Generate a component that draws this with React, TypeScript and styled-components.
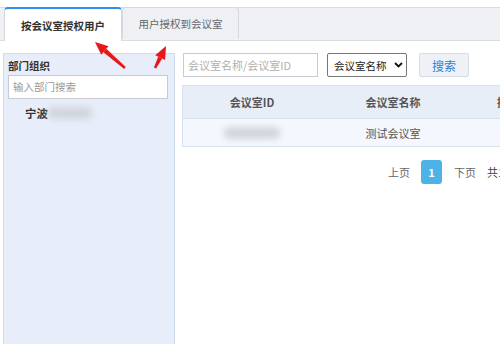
import React from "react";
import styled, { createGlobalStyle } from "styled-components";

const Global = createGlobalStyle`
  html, body { margin: 0; padding: 0; background: #fff; overflow: hidden; }
  body { width: 500px; height: 344px; font-family: "Noto Sans CJK SC", "Noto Sans", sans-serif; }
  * { box-sizing: border-box; }
`;

const Page = styled.div`
  position: relative;
  width: 500px;
  height: 344px;
  padding-top: 7px;
  overflow: hidden;
`;

const TabBar = styled.div`
  display: flex;
  height: 34px;
  padding-left: 4px;
  background: #f0f1f5;
  border-top: 1px solid #dcdde1;
  border-bottom: 1px solid #dcdde1;
  width: 560px;
`;

const Tab = styled.div<{ $active?: boolean }>`
  width: ${(p) => (p.$active ? 118 : 117)}px;
  height: ${(p) => (p.$active ? 34 : 32)}px;
  margin-top: -1px;
  display: flex;
  align-items: center;
  justify-content: center;
  font-size: 10.5px;
  font-weight: ${(p) => (p.$active ? 700 : 400)};
  color: ${(p) => (p.$active ? "#333" : "#666")};
  background: ${(p) => (p.$active ? "#fff" : "#eef0f4")};
  border: 1px solid #d6d8dd;
  border-top: ${(p) => (p.$active ? "2px solid #2e8ef0" : "1px solid #d6d8dd")};
  border-bottom: none;
  border-radius: 4px 4px 0 0;
  position: relative;
  z-index: ${(p) => (p.$active ? 2 : 1)};
`;

const Body = styled.div`
  display: flex;
  padding-top: 12px;
  padding-left: 3px;
  gap: 7px;
  height: 303px;
`;

const Side = styled.div`
  width: 172px;
  flex-shrink: 0;
  height: 300px;
  background: #e7eef9;
  border: 1px solid #cfdcef;
  border-bottom: none;
  padding: 3px 5px 0 4px;
`;

const SideTitle = styled.div`
  font-size: 10.5px;
  font-weight: 700;
  color: #333;
  height: 18px;
  line-height: 18px;
`;

const SideInput = styled.div`
  width: 160px;
  height: 24px;
  background: #fff;
  border: 1px solid #c8ccd2;
  font-size: 10.5px;
  color: #999;
  padding-left: 4px;
  line-height: 22px;
`;

const TreeNode = styled.div`
  display: flex;
  align-items: center;
  height: 28px;
  padding-left: 17px;
  font-size: 11.5px;
  font-weight: 700;
  color: #333;
`;

const Blur = styled.span<{ $w: number }>`
  display: inline-block;
  width: ${(p) => p.$w}px;
  height: 12px;
  background: #d2d5dc;
  filter: blur(3px);
  border-radius: 5px;
`;

const Main = styled.div`
  width: 420px;
  flex-shrink: 0;
`;

const Toolbar = styled.div`
  display: flex;
  align-items: center;
  height: 24px;
  padding-left: 1px;
`;

const SearchInput = styled.div`
  width: 135px;
  height: 24px;
  border: 1px solid #c8ccd2;
  font-size: 11px;
  color: #b0b0b0;
  padding-left: 4px;
  line-height: 22px;
`;

const Select = styled.div`
  margin-left: 9px;
  width: 80px;
  height: 24px;
  border: 1px solid #777;
  border-radius: 2px;
  display: flex;
  align-items: center;
  justify-content: space-between;
  padding: 0 3px 0 6px;
  font-size: 10.5px;
  color: #222;
`;

const Button = styled.div`
  margin-left: 12px;
  width: 50px;
  height: 24px;
  background: #eef2f7;
  border: 1px solid #d6dde6;
  border-radius: 2px;
  font-size: 12px;
  color: #2f7fd6;
  display: flex;
  align-items: center;
  justify-content: center;
`;

const Table = styled.div`
  margin-top: 8px;
  width: 420px;
  border: 1px solid #d8e1ef;
`;

const Row = styled.div<{ $head?: boolean }>`
  display: grid;
  grid-template-columns: 138px 144px 1fr;
  height: ${(p) => (p.$head ? 32 : 28)}px;
  background: ${(p) => (p.$head ? "#e8eef8" : "#f4f8fe")};
  border-top: ${(p) => (p.$head ? "none" : "1px solid #d8e1ef")};
  font-size: 11px;
  font-weight: ${(p) => (p.$head ? 700 : 400)};
  color: #555;
`;

const Cell = styled.div<{ $left?: number }>`
  display: flex;
  align-items: center;
  justify-content: ${(p) => (p.$left !== undefined ? "flex-start" : "center")};
  padding-left: ${(p) => p.$left ?? 0}px;
  white-space: nowrap;
`;

const Pager = styled.div`
  display: flex;
  align-items: center;
  padding-left: 206px;
  margin-top: 13px;
  font-size: 11px;
  color: #666;
  white-space: nowrap;
`;

const PageBtn = styled.div`
  width: 21px;
  height: 24px;
  margin: 0 12px 0 11px;
  background: #4db3e6;
  border-radius: 3px;
  color: #fff;
  font-weight: 700;
  display: flex;
  align-items: center;
  justify-content: center;
  font-size: 11px;
`;

const Total = styled.span`
  margin-left: 11px;
  color: #444;
`;

const Overlay = styled.svg`
  position: absolute;
  left: 0;
  top: 0;
  pointer-events: none;
  z-index: 5;
`;

const Arrow = ({ x1, y1, x2, y2 }: { x1: number; y1: number; x2: number; y2: number }) => {
  const dx = x2 - x1;
  const dy = y2 - y1;
  const len = Math.hypot(dx, dy);
  const ux = dx / len;
  const uy = dy / len;
  const hl = 13;
  const hw = 5.5;
  const bx = x2 - ux * hl;
  const by = y2 - uy * hl;
  const px = -uy;
  const py = ux;
  return (
    <g fill="#e8171b" stroke="none">
      <polygon
        points={`${x1 - px * 1.2},${y1 - py * 1.2} ${x1 + px * 1.2},${y1 + py * 1.2} ${bx + px * 2.2},${by + py * 2.2} ${bx - px * 2.2},${by - py * 2.2}`}
      />
      <polygon points={`${x2},${y2} ${bx + px * hw},${by + py * hw} ${bx - px * hw},${by - py * hw}`} />
    </g>
  );
};

export default function App() {
  return (
    <>
      <Global />
      <Page>
        <TabBar>
          <Tab $active>按会议室授权用户</Tab>
          <Tab>用户授权到会议室</Tab>
        </TabBar>
        <Body>
          <Side>
            <SideTitle>部门组织</SideTitle>
            <SideInput>输入部门搜索</SideInput>
            <TreeNode>
              宁波
              <Blur $w={44} />
            </TreeNode>
          </Side>
          <Main>
            <Toolbar>
              <SearchInput>会议室名称/会议室ID</SearchInput>
              <Select>
                <span>会议室名称</span>
                <svg width="9" height="6" viewBox="0 0 9 6">
                  <path d="M1 1l3.5 3.5L8 1" fill="none" stroke="#111" strokeWidth="1.8" />
                </svg>
              </Select>
              <Button>搜索</Button>
            </Toolbar>
            <Table>
              <Row $head>
                <Cell>会议室ID</Cell>
                <Cell>会议室名称</Cell>
                <Cell $left={32}>操作</Cell>
              </Row>
              <Row>
                <Cell>
                  <Blur $w={56} />
                </Cell>
                <Cell>测试会议室</Cell>
                <Cell />
              </Row>
            </Table>
            <Pager>
              <span>上页</span>
              <PageBtn>1</PageBtn>
              <span>下页</span>
              <Total>共1页</Total>
            </Pager>
          </Main>
        </Body>
        <Overlay width="500" height="344" viewBox="0 0 500 344">
          <Arrow x1={125} y1={68} x2={95} y2={42} />
          <Arrow x1={155} y1={68} x2={166} y2={46} />
        </Overlay>
      </Page>
    </>
  );
}
